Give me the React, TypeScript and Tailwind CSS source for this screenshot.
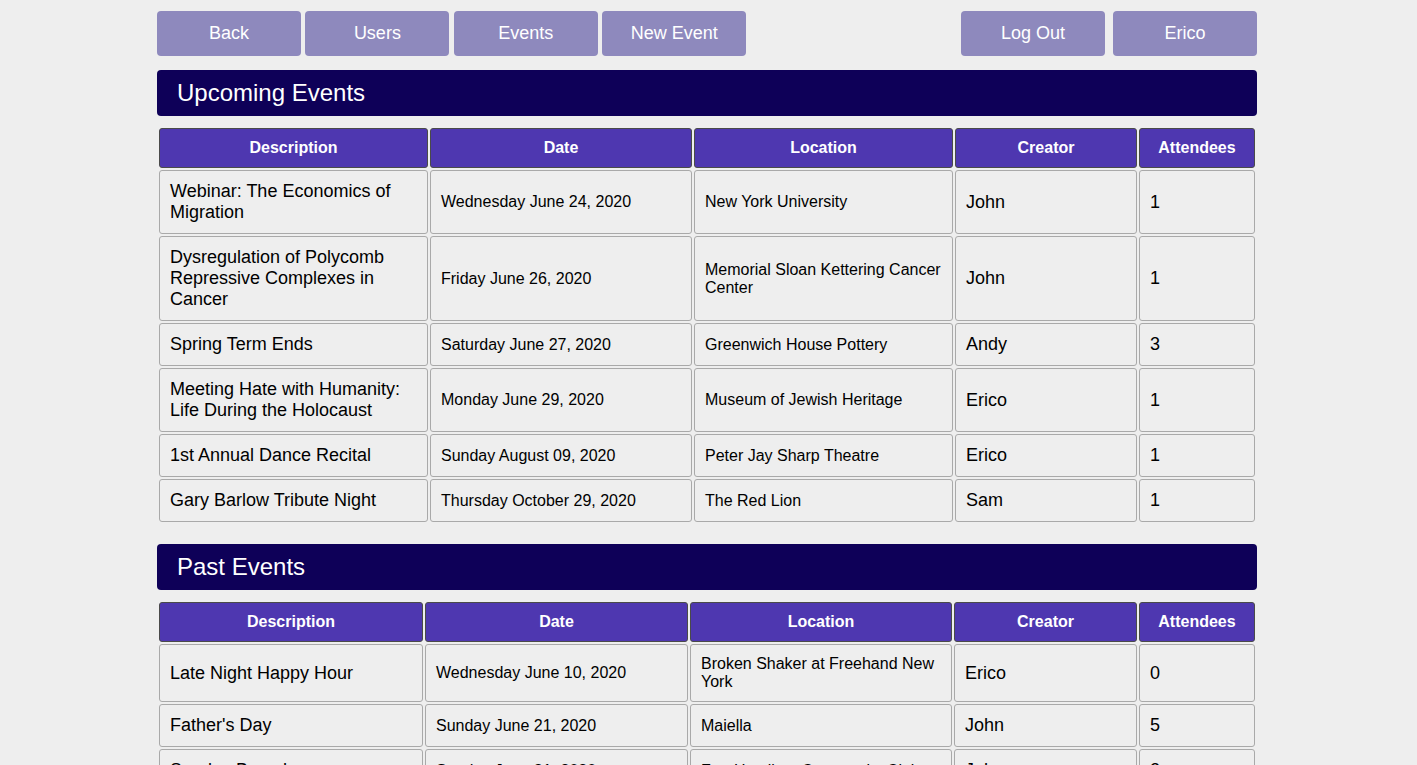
import React from 'react';

interface EventRow {
  description: string;
  date: string;
  location: string;
  creator: string;
  attendees: number;
}

const UPCOMING: EventRow[] = [
  { description: 'Webinar: The Economics of Migration', date: 'Wednesday June 24, 2020', location: 'New York University', creator: 'John', attendees: 1 },
  { description: 'Dysregulation of Polycomb Repressive Complexes in Cancer', date: 'Friday June 26, 2020', location: 'Memorial Sloan Kettering Cancer Center', creator: 'John', attendees: 1 },
  { description: 'Spring Term Ends', date: 'Saturday June 27, 2020', location: 'Greenwich House Pottery', creator: 'Andy', attendees: 3 },
  { description: 'Meeting Hate with Humanity: Life During the Holocaust', date: 'Monday June 29, 2020', location: 'Museum of Jewish Heritage', creator: 'Erico', attendees: 1 },
  { description: '1st Annual Dance Recital', date: 'Sunday August 09, 2020', location: 'Peter Jay Sharp Theatre', creator: 'Erico', attendees: 1 },
  { description: 'Gary Barlow Tribute Night', date: 'Thursday October 29, 2020', location: 'The Red Lion', creator: 'Sam', attendees: 1 },
];

const PAST: EventRow[] = [
  { description: 'Late Night Happy Hour', date: 'Wednesday June 10, 2020', location: 'Broken Shaker at Freehand New York', creator: 'Erico', attendees: 0 },
  { description: "Father's Day", date: 'Sunday June 21, 2020', location: 'Maiella', creator: 'John', attendees: 5 },
  { description: 'Sunday Brunch', date: 'Sunday June 21, 2020', location: 'Fort Hamilton Community Club', creator: 'John', attendees: 2 },
  { description: 'Summer Solstice Picnic', date: 'Saturday June 20, 2020', location: 'Central Park', creator: 'Andy', attendees: 4 },
];

function NavButton({ label }: { label: string }) {
  return (
    <button className="h-[45px] w-[144px] rounded-[4px] bg-[#8e89bd] text-[18px] leading-[21px] text-white">
      {label}
    </button>
  );
}

function SectionTitle({ title }: { title: string }) {
  return (
    <div className="flex h-[46px] items-center rounded-[4px] bg-[#0e0058] px-5 text-[24px] leading-[28px] text-white">
      {title}
    </div>
  );
}

function EventsTable({ rows, widths }: { rows: EventRow[]; widths: number[] }) {
  const th = 'rounded-[3px] border border-[#4a4a4a] bg-[#4e37b0] py-[10px] text-center text-[16px] font-bold leading-[18px] text-white';
  const td = 'rounded-[3px] border border-[#a9a9a9] bg-[#eeeeee] px-[10px] py-[10px] align-middle text-black';
  const big = 'text-[18px] leading-[21px]';
  const small = 'text-[16px] leading-[18px]';
  return (
    <table className="mt-[10px] mb-[20px] w-[1100px] table-fixed border-separate border-spacing-[2px]">
      <colgroup>
        {widths.map((w, i) => (
          <col key={i} style={{ width: w }} />
        ))}
      </colgroup>
      <thead>
        <tr>
          <th className={th}>Description</th>
          <th className={th}>Date</th>
          <th className={th}>Location</th>
          <th className={th}>Creator</th>
          <th className={th}>Attendees</th>
        </tr>
      </thead>
      <tbody>
        {rows.map((r) => (
          <tr key={r.description}>
            <td className={`${td} ${big}`}>{r.description}</td>
            <td className={`${td} ${small}`}>{r.date}</td>
            <td className={`${td} ${small}`}>{r.location}</td>
            <td className={`${td} ${big}`}>{r.creator}</td>
            <td className={`${td} ${big}`}>{r.attendees}</td>
          </tr>
        ))}
      </tbody>
    </table>
  );
}

export default function App() {
  return (
    <div className="min-h-screen bg-[#eeeeee] font-['Liberation_Sans',Arial,sans-serif]">
      <div className="ml-[157px] w-[1100px] pt-[11px]">
        {/* Nav */}
        <div className="mb-[14px] flex items-center justify-between">
          <div className="flex gap-[4.4px]">
            <NavButton label="Back" />
            <NavButton label="Users" />
            <NavButton label="Events" />
            <NavButton label="New Event" />
          </div>
          <div className="flex gap-2">
            <NavButton label="Log Out" />
            <NavButton label="Erico" />
          </div>
        </div>

        <SectionTitle title="Upcoming Events" />
        <EventsTable rows={UPCOMING} widths={[269, 262, 259, 182, 116]} />

        <SectionTitle title="Past Events" />
        <EventsTable rows={PAST} widths={[264, 263, 262, 183, 116]} />
      </div>
    </div>
  );
}
